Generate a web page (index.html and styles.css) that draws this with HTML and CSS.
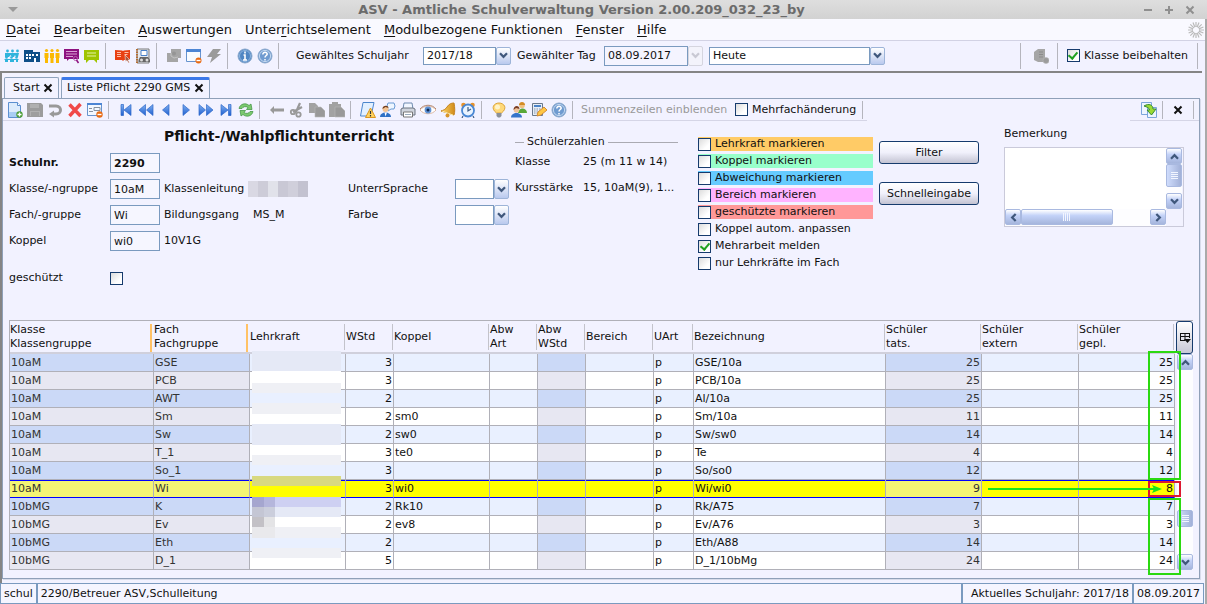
FILE: index.html
```html
<!DOCTYPE html>
<html lang="de">
<head>
<meta charset="utf-8">
<title>ASV - Amtliche Schulverwaltung</title>
<link rel="stylesheet" href="styles.css">
</head>
<body>
<svg class="defs" aria-hidden="true">
  <linearGradient id="blue" x1="0" x2="0" y1="0" y2="1"><stop offset="0" stop-color="#7fb0f0"/><stop offset="1" stop-color="#1f5fd0"/></linearGradient>
  <linearGradient id="gold" x1="0" x2="1"><stop offset="0" stop-color="#ffd768"/><stop offset="1" stop-color="#d08a18"/></linearGradient>
  <symbol id="chev" viewBox="0 0 10 8"><path d="M1 1.500L5 5.500L9 1.500" fill="none" stroke="currentColor" stroke-width="2.600"/></symbol>
  <symbol id="pupils" viewBox="0 0 16 16"><g fill="#2fb4dc"><circle cx="3.500" cy="3" r="1.400"/><circle cx="8.500" cy="3" r="1.400"/><circle cx="13.500" cy="3" r="1.400"/><path d="M1 5h14l-1 4h-2l-1-2-1 2H8L6.500 7 5 9H1z"/><circle cx="2.500" cy="9.500" r="1.300"/><circle cx="7.500" cy="9.500" r="1.300"/><circle cx="12.500" cy="9.500" r="1.300"/><path d="M0 11h15l-1 1v2h-2v-2h-2v2H6v-2H4v2H1v-2z"/></g></symbol>
  <symbol id="school" viewBox="0 0 16 16"><path d="M0 2h9v2h7v10H0z" fill="#0f4f88"/><path d="M2 6h2v2H2zM5 6h2v2H5zM8 6h2v2H8zM12 6h2v2h-2zM2 9h2v2H2zM5 9h2v2H5zM10 10h2v4h-2z" fill="#fff"/></symbol>
  <symbol id="staff" viewBox="0 0 16 16"><g fill="#fbb900"><circle cx="2.500" cy="2.500" r="1.600"/><circle cx="8" cy="2.500" r="1.600"/><circle cx="13.500" cy="2.500" r="1.600"/><path d="M.5 5h4v5H4v5H1v-5H.5zM6 5h4v5h-.5v5h-3v-5H6zM11.500 5h4v5H15v5h-3v-5h-.5z"/></g></symbol>
  <symbol id="board" viewBox="0 0 16 16"><path d="M0 1h15v10H5l-2 2v-2H0z" fill="#8d117f"/><path d="M2 3.500h11M2 6h11M2 8.500h7" stroke="#d9a0d4"/><circle cx="11.500" cy="10.500" r="2" fill="none" stroke="#b85fb0"/><path d="M12.500 12l2 3" stroke="#8d117f" stroke-width="1.500"/></symbol>
  <symbol id="green" viewBox="0 0 16 16"><path d="M0 2h15v10h-2v3l-3-3H5l-3 3v-3H0z" fill="#9fc400"/><path d="M3 5h9M3 8h9" stroke="#e4f2a4"/></symbol>
  <symbol id="book" viewBox="0 0 16 16"><path d="M0 2l7 .5L8 3l1-.5L15 2v10H9l-1 1-1-1H0z" fill="#e83f12"/><path d="M2 4.500h4M2 6.500h4M2 8.500h4M9.500 4.500h4M9.500 6.500h3" stroke="#ffc0a8"/><path d="M10 7l5 5h-2l1.500 2.500-1 .5-1.500-2.500-1.500 1z" fill="#a9553d" stroke="#fff" stroke-width=".5"/></symbol>
  <symbol id="address" viewBox="0 0 16 16"><path d="M2 1h12v14H2z" fill="#e4e8ee" stroke="#7b7b7b"/><path d="M2 1v14" stroke="#b56c30" stroke-width="2" stroke-dasharray="1.500 1"/><path d="M6 2.500h6v5H6z" fill="#fff" stroke="#4b82c9"/><path d="M5 9h8l2 3v2H3.500v-2z" fill="#666"/><circle cx="6.500" cy="12" r="1.500" fill="#ddd"/><circle cx="12" cy="12" r="1.500" fill="#ddd"/></symbol>
  <symbol id="puzzle" viewBox="0 0 16 16"><path d="M5 1h10v9h-3v4H1V5h4z" fill="#a5a5a5"/><path d="M5 5v3l3 2 4-1" fill="none" stroke="#c2c2c2"/><circle cx="8" cy="5.500" r="2" fill="#959595"/></symbol>
  <symbol id="window" viewBox="0 0 16 16"><path d="M.5 1.500h14v12H.5z" fill="#f8fbff" stroke="#6793ce"/><path d="M0 1h15v3H0z" fill="#4c85d4"/><circle cx="12.500" cy="12.500" r="3" fill="#e86a12"/><path d="M10.500 12.500h4" stroke="#fff" stroke-width="1.400"/></symbol>
  <symbol id="bolt" viewBox="0 0 16 16"><path d="M7 1h8l-4 5h4L4 15l2-6H1z" fill="#9b9b9b"/></symbol>
  <symbol id="info" viewBox="0 0 16 16"><circle cx="8" cy="8" r="7" fill="#4f86c3" stroke="#8aa8cc"/><circle cx="8" cy="8" r="5.500" fill="none" stroke="#a9c9ea" stroke-width=".7"/><path d="M8 3.500v2M6.500 7H8v5M6 12h4" stroke="#fff" stroke-width="1.600" fill="none"/></symbol>
  <symbol id="help" viewBox="0 0 16 16"><circle cx="8" cy="8" r="7" fill="#6f9bd0" stroke="#8aa8cc"/><circle cx="8" cy="8" r="5.600" fill="none" stroke="#d8e6f6" stroke-width=".8"/><path d="M5.800 6.500c0-3 4.600-2.600 4.400-.3C10 7.600 8 7.500 8 9.500M8 11v1.500" stroke="#fff" stroke-width="1.500" fill="none"/></symbol>
  <symbol id="server" viewBox="0 0 16 16"><path d="M1 4l4-3h7v13H5l-4-2z" fill="#a6a6a6"/><path d="M6 4h4M6 6.500h4M6 9h4" stroke="#8b8b8b"/><circle cx="13" cy="12.500" r="3" fill="#9c9c9c" stroke="#b8b8b8" stroke-width=".6"/></symbol>
  <symbol id="new" viewBox="0 0 16 16"><path d="M1.500 .5h9l3 3v12h-12z" fill="#dcebfc" stroke="#5b8fd0"/><path d="M2 10h11v5H2z" fill="#a9cdf4"/><path d="M10.500 .5v3h3" fill="#fff" stroke="#5b8fd0"/><circle cx="12.500" cy="12.500" r="3.200" fill="#4a9c35"/><path d="M10.500 12.500h4M12.500 10.500v4" stroke="#fff" stroke-width="1.300"/></symbol>
  <symbol id="save" viewBox="0 0 16 16"><path d="M0 1h14l2 2v12H0z" fill="#9c9c9c"/><path d="M3 2h9v4H3zM3 9h10v5H3z" fill="#b0b0b0"/><path d="M4 11h8M4 13h8" stroke="#8c8c8c"/></symbol>
  <symbol id="undo" viewBox="0 0 16 16"><path d="M2 4h7c6 0 6 8 0 8H6" fill="none" stroke="#999" stroke-width="3"/><path d="M7 8.500v7L2 12z" fill="#999"/></symbol>
  <symbol id="delete" viewBox="0 0 16 16"><path d="M2.500 2.500L13.500 14M13.500 2L2.500 14" stroke="#f04848" stroke-width="3.400"/></symbol>
  <symbol id="form" viewBox="0 0 16 16"><path d="M.5 1.500h14v12H.5z" fill="#f3f8ff" stroke="#6793ce"/><path d="M0 2h15" stroke="#4c85d4" stroke-width="2"/><path d="M2 6.500h3M2 9.500h4M7 5.500h6v3H7z" stroke="#87919e" fill="none"/><circle cx="12.500" cy="12.500" r="3.200" fill="#e86a12"/><path d="M10.500 12.500h4" stroke="#fff" stroke-width="1.400"/></symbol>
  <symbol id="first" viewBox="0 0 16 16"><path d="M3 2.500h2.500v11H3zM13 2.500v11L6 8z" fill="url(#blue)" stroke="#2f68c8" stroke-width=".7"/></symbol>
  <symbol id="rewind" viewBox="0 0 16 16"><path d="M7.500 2.500v11L1 8zM15 2.500v11L8.500 8z" fill="url(#blue)" stroke="#2f68c8" stroke-width=".7"/></symbol>
  <symbol id="prev" viewBox="0 0 16 16"><path d="M11 2.500v11L4.500 8z" fill="url(#blue)" stroke="#2f68c8" stroke-width=".7"/></symbol>
  <symbol id="next" viewBox="0 0 16 16"><path d="M5 2.500v11L11.500 8z" fill="url(#blue)" stroke="#2f68c8" stroke-width=".7"/></symbol>
  <symbol id="forward" viewBox="0 0 16 16"><path d="M1 2.500v11L7.500 8zM8.500 2.500v11L15 8z" fill="url(#blue)" stroke="#2f68c8" stroke-width=".7"/></symbol>
  <symbol id="last" viewBox="0 0 16 16"><path d="M10.500 2.500H13v11h-2.500zM3 2.500v11L10 8z" fill="url(#blue)" stroke="#2f68c8" stroke-width=".7"/></symbol>
  <symbol id="refresh" viewBox="0 0 16 16"><g fill="#7cc96f" stroke="#3a8f3c" stroke-width=".7"><path d="M1 6.500C2 1.500 8 .5 11 3.500l2-1.500 1 5.500H8.500L10 5.500C8 4 5 4.500 4 6.500z"/><path d="M15 9.500c-1 5-7 6-10 3L3 14 2 8.500h5.500L6 10.500c2 1.500 5 1 6-1z"/></g></symbol>
  <symbol id="left" viewBox="0 0 16 16"><path d="M1 8l4-4v2.500h10v3H5V12z" fill="#999"/></symbol>
  <symbol id="cut" viewBox="0 0 16 16"><path d="M11 1L7 10M13 5L4 10" stroke="#999" stroke-width="2.200"/><circle cx="4" cy="10" r="2.200" fill="none" stroke="#999" stroke-width="1.800"/><circle cx="9.500" cy="12.500" r="2.200" fill="none" stroke="#999" stroke-width="1.800"/></symbol>
  <symbol id="copy" viewBox="0 0 16 16"><path d="M0 1h6l3 3v7H0z" fill="#a2a2a2"/><path d="M6 5h6l4 4v6H6z" fill="#999" stroke="#bbb" stroke-width=".6"/></symbol>
  <symbol id="paste" viewBox="0 0 16 16"><path d="M0 2h3V0h6v2h3v13H0z" fill="#a2a2a2"/><path d="M6 5h6l4 4v6H6z" fill="#999" stroke="#bbb" stroke-width=".6"/></symbol>
  <symbol id="warn" viewBox="0 0 16 16"><path d="M3 .5h11L11.500 12v2H.5z" fill="#e2f0ff" stroke="#4c86cc"/><path d="M10.500 6l5 9.500h-10z" fill="#ffd35e" stroke="#dc951d"/><path d="M10.500 9v3M10.500 13v1.500" stroke="#333" stroke-width="1.200"/></symbol>
  <symbol id="talk" viewBox="0 0 16 16"><path d="M8 1h6q2 3 0 6h-3l-3 2V7q-2-3 0-6z" fill="#eef6ff" stroke="#6a9bd4"/><circle cx="5.500" cy="7" r="3" fill="#f4c392"/><path d="M2.500 7c0-4 6-4 6-1L5.500 5z" fill="#6f3e1e"/><path d="M0 15c0-6 11-6 11 0z" fill="#2f71c6"/><path d="M4.500 10.500l1 4 1.500-4z" fill="#fff"/></symbol>
  <symbol id="print" viewBox="0 0 16 16"><path d="M4 1h8l1 6H3z" fill="#f2f7ff" stroke="#6e8bb0"/><path d="M1 7l2-1h10l2 1v6H1z" fill="#cfd4dc" stroke="#6c7480"/><path d="M3.500 10h9v5h-9z" fill="#fff" stroke="#777"/><path d="M5 12.500h6" stroke="#9ab"/></symbol>
  <symbol id="eye" viewBox="0 0 16 16"><path d="M0 8c4-5 12-5 16 0-4 5-12 5-16 0z" fill="#fff" stroke="#dcb9a5"/><path d="M0 7c4-5 12-5 16 0" fill="none" stroke="#b58a74"/><circle cx="8" cy="8" r="3.400" fill="#5f92d5"/><circle cx="8" cy="8" r="1.500" fill="#122b50"/></symbol>
  <symbol id="bell" viewBox="0 0 16 16"><path d="M14 1c1 5 1 9 0 12L1 9c3-1 5-2 6-4 2-3 4-4 7-4z" fill="url(#gold)" stroke="#c58420"/><path d="M2 9l11 4" stroke="#fff0ad"/><circle cx="7.500" cy="13.500" r="2" fill="#d9962a"/></symbol>
  <symbol id="clock" viewBox="0 0 16 16"><circle cx="3.500" cy="3" r="2.300" fill="#e5902a"/><circle cx="12.500" cy="3" r="2.300" fill="#e5902a"/><circle cx="8" cy="8.500" r="6" fill="#eaf4ff" stroke="#4a88d4" stroke-width="1.800"/><path d="M8 5v4l3-2M3 14l-1 2M13 14l1 2" stroke="#3c5c86" stroke-width="1.200" fill="none"/></symbol>
  <symbol id="bulb" viewBox="0 0 16 16"><path d="M5.500 11C-1 6 3 1 8 1s9 5 2.500 10z" fill="#ffd97a" stroke="#dca53c"/><circle cx="6.500" cy="5" r="2.500" fill="#fff3c8"/><path d="M5.500 11h5v3L9 15.500H7L5.500 14z" fill="#8a9099"/></symbol>
  <symbol id="users" viewBox="0 0 16 16"><circle cx="11" cy="3.500" r="2.800" fill="#f0c080"/><path d="M8 3c0-4 6-4 6 0z" fill="#d48c25"/><path d="M7 11c0-6 9-6 9 0z" fill="#59a838"/><circle cx="5.500" cy="8" r="2.800" fill="#f0c29b"/><path d="M2.500 8c0-5 6-5 6-1L5 6z" fill="#7a3d24"/><path d="M0 15.500c0-6 11-6 11 0z" fill="#3575cb"/></symbol>
  <symbol id="calc" viewBox="0 0 16 16"><path d="M1.500 1.500h10v12h-10z" fill="#e7edf6" stroke="#69788c"/><path d="M3 3h7v2H3z" fill="#4b83c8"/><path d="M3 7h7M3 9h7M3 11h5" stroke="#8495ab" stroke-dasharray="1.500 1"/><path d="M6 14l1-4 6-5 3 3-6 5z" fill="#ffc744" stroke="#d58c35"/></symbol>
  <symbol id="export" viewBox="0 0 16 16"><path d="M.5 .5h10v12H.5z" fill="#edf5ff" stroke="#7ba5dc"/><path d="M6.500 5.500h9v10h-9z" fill="#edf5ff" stroke="#7ba5dc"/><path d="M3 4c5-3 9-1 9 3h3l-4.500 6L6 8h2.500C8.500 6 6 5 3 4z" fill="#9bdb35" stroke="#368a35"/></symbol>
</svg>

<header class="titlebar">
  <span class="win-menu"></span>
  <h1>ASV - Amtliche Schulverwaltung Version 2.00.209_032_23_by</h1>
  <div class="win-buttons">
    <button type="button" aria-label="Minimieren"><svg viewBox="0 0 10 10"><path d="M1 5h8"/></svg></button>
    <button type="button" aria-label="Maximieren"><svg viewBox="0 0 10 10"><path d="M1 5h8M5 1v8"/></svg></button>
    <button type="button" aria-label="Schließen"><svg viewBox="0 0 10 10"><path d="M1.500 1.500l7 7M8.500 1.500l-7 7"/></svg></button>
  </div>
</header>
<div class="frame">
<nav class="menubar">
  <a href="#"><u>D</u>atei</a><a href="#"><u>B</u>earbeiten</a><a href="#"><u>A</u>uswertungen</a><a href="#">Unter<u>r</u>ichtselement</a><a href="#"><u>M</u>odulbezogene Funktionen</a><a href="#"><u>F</u>enster</a><a href="#"><u>H</u>ilfe</a>
  <svg class="spinner" viewBox="0 0 16 16"><g stroke="#bbb" stroke-width="1.200"><path d="M8 0v5M8 11v5M0 8h5M11 8h5M2.300 2.300l3.600 3.600M10.100 10.100l3.600 3.600M2.300 13.700l3.600-3.600M10.100 5.900l3.600-3.600M5 .6l1.900 4.600M9.100 10.800l1.900 4.600M11 .6L9.100 5.200M6.900 10.800L5 15.400M.6 5l4.600 1.900M10.800 9.100l4.600 1.900M.6 11l4.600-1.900M10.800 6.900L15.400 5"/></g></svg>
</nav>
<div class="toolbar main-tools">
  <div class="icons">
    <button type="button" aria-label="Schüler"><svg><use href="#pupils"/></svg></button>
    <button type="button" aria-label="Schule"><svg><use href="#school"/></svg></button>
    <button type="button" aria-label="Lehrkräfte"><svg><use href="#staff"/></svg></button>
    <button type="button" aria-label="Klassen"><svg><use href="#board"/></svg></button>
    <button type="button" aria-label="Unterricht"><svg><use href="#green"/></svg></button>
  </div>
  <div class="icons">
    <button type="button" aria-label="Unterrichtsplanung"><svg><use href="#book"/></svg></button>
    <button type="button" aria-label="Adressen"><svg><use href="#address"/></svg></button>
  </div>
  <div class="icons">
    <button type="button" aria-label="Module"><svg><use href="#puzzle"/></svg></button>
    <button type="button" aria-label="Fenster schließen"><svg><use href="#window"/></svg></button>
    <button type="button" aria-label="Ausführen"><svg><use href="#bolt"/></svg></button>
  </div>
  <div class="icons">
    <button type="button" aria-label="Info"><svg><use href="#info"/></svg></button>
    <button type="button" aria-label="Hilfe"><svg><use href="#help"/></svg></button>
  </div>
  <label class="year-label" for="year">Gewähltes Schuljahr</label>
  <span class="combo year"><select id="year"><option>2017/18</option></select><i class="arrow"><svg><use href="#chev"/></svg></i></span>
  <label class="day-label" for="day">Gewählter Tag</label>
  <span class="combo day off"><input id="day" value="08.09.2017"><i class="arrow"><svg><use href="#chev"/></svg></i></span>
  <span class="combo today"><select aria-label="Tag"><option>Heute</option></select><i class="arrow"><svg><use href="#chev"/></svg></i></span>
  <div class="keep">
    <button type="button" aria-label="Server"><svg><use href="#server"/></svg></button>
    <label class="check"><input type="checkbox" checked>Klasse beibehalten</label>
  </div>
</div>

<main class="desk">
  <div class="tabs">
    <div class="tab">Start<button type="button" aria-label="Tab schließen"><svg viewBox="0 0 10 10"><path d="M1.500 1.500l7 7M8.500 1.500l-7 7"/></svg></button></div>
    <div class="tab active">Liste Pflicht 2290 GMS<button type="button" aria-label="Tab schließen"><svg viewBox="0 0 10 10"><path d="M1.500 1.500l7 7M8.500 1.500l-7 7"/></svg></button></div>
  </div>
  <section class="panel">
    <div class="panel-tools">
      <div class="toolbar list-tools">
        <div class="icons">
          <button type="button" aria-label="Neu"><svg><use href="#new"/></svg></button>
          <button type="button" aria-label="Speichern"><svg><use href="#save"/></svg></button>
          <button type="button" aria-label="Rückgängig"><svg><use href="#undo"/></svg></button>
          <button type="button" aria-label="Löschen"><svg><use href="#delete"/></svg></button>
          <button type="button" aria-label="Formular"><svg><use href="#form"/></svg></button>
        </div>
        <div class="icons">
          <button type="button" aria-label="Erster"><svg><use href="#first"/></svg></button>
          <button type="button" aria-label="Seite zurück"><svg><use href="#rewind"/></svg></button>
          <button type="button" aria-label="Zurück"><svg><use href="#prev"/></svg></button>
          <button type="button" aria-label="Weiter"><svg><use href="#next"/></svg></button>
          <button type="button" aria-label="Seite vor"><svg><use href="#forward"/></svg></button>
          <button type="button" aria-label="Letzter"><svg><use href="#last"/></svg></button>
          <button type="button" aria-label="Aktualisieren"><svg><use href="#refresh"/></svg></button>
        </div>
        <div class="icons">
          <button type="button" aria-label="Links"><svg><use href="#left"/></svg></button>
          <button type="button" aria-label="Ausschneiden"><svg><use href="#cut"/></svg></button>
          <button type="button" aria-label="Kopieren"><svg><use href="#copy"/></svg></button>
          <button type="button" aria-label="Einfügen"><svg><use href="#paste"/></svg></button>
        </div>
        <div class="icons">
          <button type="button" aria-label="Prüfen"><svg><use href="#warn"/></svg></button>
          <button type="button" aria-label="Nachricht"><svg><use href="#talk"/></svg></button>
          <button type="button" aria-label="Drucken"><svg><use href="#print"/></svg></button>
          <button type="button" aria-label="Ansicht"><svg><use href="#eye"/></svg></button>
          <button type="button" aria-label="Glocke"><svg><use href="#bell"/></svg></button>
          <button type="button" aria-label="Wecker"><svg><use href="#clock"/></svg></button>
        </div>
        <div class="icons">
          <button type="button" aria-label="Tipp"><svg><use href="#bulb"/></svg></button>
          <button type="button" aria-label="Personen"><svg><use href="#users"/></svg></button>
          <button type="button" aria-label="Berechnen"><svg><use href="#calc"/></svg></button>
          <button type="button" aria-label="Hilfe"><svg><use href="#help"/></svg></button>
        </div>
        <div class="multi">
          <button type="button" class="sums" disabled>Summenzeilen einblenden</button>
          <label class="check"><input type="checkbox">Mehrfachänderung</label>
        </div>
      </div>
      <div class="toolbar close-tools">
        <button type="button" aria-label="Exportieren"><svg><use href="#export"/></svg></button>
        <button type="button" class="close" aria-label="Schließen"><svg viewBox="0 0 10 10"><path d="M1.500 1.500l7 7M8.500 1.500l-7 7"/></svg></button>
      </div>
    </div>

    <form class="details">
      <div class="fields">
        <h2>Pflicht-/Wahlpflichtunterricht</h2>
        <label class="strong" for="nr">Schulnr.</label><input class="strong" id="nr" value="2290">
        <label class="first" for="kl">Klasse/-ngruppe</label><input id="kl" value="10aM">
        <div class="extra">Klassenleitung <span class="masked"><i></i><i></i><i></i><i></i><i></i><i></i></span></div>
        <label for="us">UnterrSprache</label><span class="combo"><select id="us"><option></option></select><i class="arrow"><svg><use href="#chev"/></svg></i></span>
        <label class="first" for="fg">Fach/-gruppe</label><input id="fg" value="Wi">
        <div class="extra"><span class="course">Bildungsgang</span><span>MS_M</span></div>
        <label for="fa">Farbe</label><span class="combo"><select id="fa"><option></option></select><i class="arrow"><svg><use href="#chev"/></svg></i></span>
        <label class="first" for="ko">Koppel</label><input id="ko" value="wi0"><div class="extra">10V1G</div>
        <label class="first guard" for="gs">geschützt</label><input class="guard" type="checkbox" id="gs">
      </div>
      <fieldset class="counts">
        <legend>Schülerzahlen</legend>
        <dl><dt>Klasse</dt><dd>25 (m 11 w 14)</dd><dt>Kursstärke</dt><dd>15, 10aM(9), 1...</dd></dl>
      </fieldset>
      <div class="marks">
        <label class="check mark-orange"><input type="checkbox">Lehrkraft markieren</label>
        <label class="check mark-mint"><input type="checkbox">Koppel markieren</label>
        <label class="check mark-sky"><input type="checkbox">Abweichung markieren</label>
        <label class="check mark-pink"><input type="checkbox">Bereich markieren</label>
        <label class="check mark-red"><input type="checkbox">geschützte markieren</label>
        <label class="check"><input type="checkbox">Koppel autom. anpassen</label>
        <label class="check"><input type="checkbox" checked>Mehrarbeit melden</label>
        <label class="check"><input type="checkbox">nur Lehrkräfte im Fach</label>
      </div>
      <div class="actions"><button type="button">Filter</button><button type="button">Schnelleingabe</button></div>
      <div class="remark">
        <label for="rem">Bemerkung</label>
        <div class="scrollbox">
          <textarea id="rem"></textarea>
          <div class="vbar"><i class="sb"><svg class="up"><use href="#chev"/></svg></i><i class="thumb"></i><i class="sb end"><svg><use href="#chev"/></svg></i></div>
          <div class="hbar"><i class="sb"><svg class="lt"><use href="#chev"/></svg></i><i class="thumb"></i><i class="sb end"><svg class="rt"><use href="#chev"/></svg></i></div>
        </div>
      </div>
    </form>

    <div class="list">
      <table>
        <colgroup><col class="c144"><col class="c96"><col class="c96"><col class="c48"><col class="c96"><col class="c48"><col class="c48"><col class="c68"><col class="c40"><col><col class="c96"><col class="c97"><col class="c96"></colgroup>
        <thead><tr><th class="sorted">Klasse<br>Klassengruppe</th><th class="sorted">Fach<br>Fachgruppe</th><th>Lehrkraft</th><th>WStd</th><th>Koppel</th><th>Abw<br>Art</th><th>Abw<br>WStd</th><th>Bereich</th><th>UArt</th><th>Bezeichnung</th><th>Schüler<br>tats.</th><th>Schüler<br>extern</th><th>Schüler<br>gepl.</th></tr></thead>
        <tbody>
          <tr><td>10aM</td><td>GSE</td><td></td><td>3</td><td></td><td></td><td></td><td></td><td>p</td><td>GSE/10a</td><td>25</td><td></td><td>25</td></tr>
          <tr><td>10aM</td><td>PCB</td><td></td><td>3</td><td></td><td></td><td></td><td></td><td>p</td><td>PCB/10a</td><td>25</td><td></td><td>25</td></tr>
          <tr><td>10aM</td><td>AWT</td><td></td><td>2</td><td></td><td></td><td></td><td></td><td>p</td><td>Al/10a</td><td>25</td><td></td><td>25</td></tr>
          <tr><td>10aM</td><td>Sm</td><td></td><td>2</td><td>sm0</td><td></td><td></td><td></td><td>p</td><td>Sm/10a</td><td>11</td><td></td><td>11</td></tr>
          <tr><td>10aM</td><td>Sw</td><td></td><td>2</td><td>sw0</td><td></td><td></td><td></td><td>p</td><td>Sw/sw0</td><td>14</td><td></td><td>14</td></tr>
          <tr><td>10aM</td><td>T_1</td><td></td><td>3</td><td>te0</td><td></td><td></td><td></td><td>p</td><td>Te</td><td>4</td><td></td><td>4</td></tr>
          <tr><td>10aM</td><td>So_1</td><td></td><td>3</td><td></td><td></td><td></td><td></td><td>p</td><td>So/so0</td><td>12</td><td></td><td>12</td></tr>
          <tr class="selected"><td>10aM</td><td>Wi</td><td></td><td>3</td><td>wi0</td><td></td><td></td><td></td><td>p</td><td>Wi/wi0</td><td>9</td><td></td><td>8</td></tr>
          <tr><td>10bMG</td><td>K</td><td></td><td>2</td><td>Rk10</td><td></td><td></td><td></td><td>p</td><td>Rk/A75</td><td>7</td><td></td><td>7</td></tr>
          <tr><td>10bMG</td><td>Ev</td><td></td><td>2</td><td>ev8</td><td></td><td></td><td></td><td>p</td><td>Ev/A76</td><td>3</td><td></td><td>3</td></tr>
          <tr><td>10bMG</td><td>Eth</td><td></td><td>2</td><td></td><td></td><td></td><td></td><td>p</td><td>Eth/A88</td><td>14</td><td></td><td>14</td></tr>
          <tr><td>10bMG</td><td>D_1</td><td></td><td>5</td><td></td><td></td><td></td><td></td><td>p</td><td>D_1/10bMg</td><td>24</td><td></td><td>24</td></tr>
        </tbody>
      </table>
      <div class="list-side">
        <button type="button" class="columns" aria-label="Spalten"><svg viewBox="0 0 12 12"><path d="M1 1.500h10M1.500 1v8M6 1v8M10.500 1v5M1 4.500h10M1 8.500h5" fill="none" stroke="#111"/><path d="M5 7h7l-3.500 4z" fill="#111"/></svg></button>
        <div class="vbar"><i class="sb"><svg class="up"><use href="#chev"/></svg></i><i class="thumb"></i><i class="sb end"><svg><use href="#chev"/></svg></i></div>
      </div>
      <svg class="mask" viewBox="0 0 89 218" preserveAspectRatio="none">
        <path d="M0 0h89v20H0z" fill="#e5e9f6"/><path d="M0 20h89v12H0z" fill="#fff"/><path d="M0 32h89v10H0z" fill="#eff0f5"/><path d="M0 42h89v10H0z" fill="#e9f0ff"/><path d="M0 52h89v11H0z" fill="#eff0f5"/><path d="M0 63h89v10H0z" fill="#fff"/><path d="M0 73h89v21H0z" fill="#e5e9f6"/><path d="M0 94h89v10H0z" fill="#fff"/><path d="M0 104h89v10H0z" fill="#eff0f5"/><path d="M0 114h89v11H0z" fill="#e9f0ff"/><path d="M0 125h89v10H0z" fill="#d8d980"/><path d="M0 135h89v11H0z" fill="#ff0"/><path d="M0 146h89v10H0z" fill="#ced0f2"/><path d="M0 156h89v10H0z" fill="#e5e9f6"/><path d="M0 166h89v10H0z" fill="#fff"/><path d="M0 176h89v11H0z" fill="#eff0f5"/><path d="M0 187h89v10H0z" fill="#e9f0ff"/><path d="M0 197h89v10H0z" fill="#eff0f5"/><path d="M0 207h89v11H0z" fill="#fff"/>
        <path d="M0 146h12v10H0z" fill="#a5a6cf"/><path d="M12 146h11v10H12z" fill="#b5b6dc"/><path d="M0 156h12v10H0z" fill="#c4c6d4"/><path d="M12 156h11v10H12z" fill="#cbcedc"/><path d="M0 166h12v10H0z" fill="#c3c1c6"/><path d="M12 166h11v10H12z" fill="#e4e4e6"/><path d="M0 176h23v11H0z" fill="#e9e9ec"/>
      </svg>
      <div class="note note-top"></div>
      <div class="note note-row"></div>
      <div class="note note-bottom"></div>
      <svg class="pointer" viewBox="0 0 174 8"><path d="M0 4h168" stroke="#19e319" stroke-width="2"/><path d="M164 0l10 4-10 4 2-4z" fill="#19e319"/></svg>
    </div>
  </section>
</main>
<footer class="status"><span>schul</span><span class="grow">2290/Betreuer ASV,Schulleitung</span><span class="term">Aktuelles Schuljahr: 2017/18</span><span>08.09.2017</span></footer>
</div>
</body>
</html>
```
FILE: styles.css
```css
* { box-sizing: border-box; }
body { margin: 0; min-height: 100vh; display: flex; flex-direction: column; background: #f2f2ff; color: #111; font: 11px/14px "DejaVu Sans", sans-serif; }
button, input, select, textarea { font: inherit; color: inherit; margin: 0; border-radius: 0; }
button { border: 0; padding: 0; background: none; display: flex; align-items: center; justify-content: center; }
h1, h2, dl, dd { margin: 0; }
svg { display: block; }
.defs { position: absolute; width: 0; height: 0; }

.titlebar { height: 19px; display: flex; align-items: center; padding: 0 12px 0 8px; background: linear-gradient(#dedede, #d2d2d2); color: #6b6b6b; }
.titlebar h1 { flex: 1; text-align: center; font-size: 13px; line-height: 19px; padding-left: 2px; }
.win-menu { border: 5px solid transparent; border-top-color: #999; border-bottom: 0; }
.win-buttons { display: flex; gap: 11px; }
.win-buttons svg { width: 10px; height: 10px; stroke: #8f8f8f; stroke-width: 2; }

.frame { flex: 1; display: flex; flex-direction: column; border-right: 2px solid #a9a9a9; }
.menubar { height: 22px; display: flex; align-items: center; gap: 13px; padding: 0 1px 0 6px; background: #f9f9ff; border-bottom: 1px solid #d2d2e4; font-size: 13px; line-height: 20px; }
.menubar a { color: #111; text-decoration: none; }
.menubar u { text-underline-offset: 2px; }
.spinner { width: 16px; height: 16px; margin-left: auto; }

.toolbar { display: flex; align-items: center; }
.toolbar button svg { width: 16px; height: 16px; }
.icons { display: flex; align-items: center; gap: 4px; border-right: 1px solid #b5b5bd; }
.main-tools { height: 30px; padding: 1px 7px 2px 4px; }
.main-tools .icons { height: 26px; padding-right: 5px; }
.main-tools .icons + .icons { padding-left: 9px; }
.year-label { margin-left: 17px; width: 127px; }
.day-label { margin-left: 6px; width: 87px; }
.combo { display: flex; height: 18px; }
.combo select, .combo input { appearance: none; flex: 1; min-width: 0; padding: 0 3px; border: 1px solid #7a9abf; background: #fff; outline: 0; }
.arrow { width: 15px; display: flex; align-items: center; justify-content: center; border: 1px solid #9db4d8; border-radius: 2px; background: linear-gradient(#fff, #b9c9ee); color: #40587c; }
.arrow svg { width: 9px; height: 7px; }
.year { width: 88px; }
.day { width: 99px; height: 20px; }
.off input { background: #f4f4ff; }
.off .arrow { background: #f3f3fb; border-color: #d5d5df; color: #c9c9d4; }
.today { width: 176px; margin-left: 6px; }
.keep { display: flex; align-items: center; height: 26px; margin-left: auto; border: solid #b5b5bd; border-width: 0 1px; padding-right: 9px; }
.keep button { width: 37px; height: 26px; padding-left: 5px; border-right: 1px solid #b5b5bd; margin-right: 9px; }
.check { display: flex; align-items: center; gap: 4px; white-space: nowrap; }
input[type="checkbox"] { appearance: none; flex: none; width: 13px; height: 13px; border: 1px solid #163b6d; background: linear-gradient(135deg, #dcdcdc, #fff 70%); display: grid; place-items: center; }
input[type="checkbox"]:checked::after { content: ""; width: 4px; height: 7px; margin-top: -2px; border: solid #21a121; border-width: 0 2px 2px 0; transform: rotate(40deg); }

.desk { flex: 1; display: flex; flex-direction: column; margin-right: 3px; padding: 4px 2px 4px 0; border: solid #858585; border-width: 2px 0 0 2px; }
.tabs { display: flex; align-items: flex-end; gap: 2px; padding-left: 2px; }
.tab { height: 21px; display: flex; align-items: center; gap: 3px; padding: 0 5px 0 8px; border: 1px solid #8fa3bd; border-bottom: 0; border-radius: 2px 2px 0 0; }
.tab.active { padding-left: 5px; padding-bottom: 3px; border-top: 3px solid #3b78e8; gap: 4px; }
.tab svg, .close svg { width: 10px; height: 10px; stroke: #111; stroke-width: 2; }
.tab button { width: 10px; }
.panel { flex: 1; display: flex; flex-direction: column; border: 1px solid #8fa0b8; padding-bottom: 7px; box-shadow: 1px 1px 0 #d7dbea; }
.panel-tools { display: flex; justify-content: space-between; }
.panel-tools .toolbar { height: 22px; border-bottom: 1px solid #d5d5e6; }
.list-tools { padding: 0 4px; }
.list-tools .icons { height: 18px; padding: 0 5px 0 9px; }
.list-tools .icons:first-child { padding-left: 0; }
.multi { display: flex; align-items: center; gap: 4px; height: 18px; padding: 0 6px 0 8px; border-right: 1px solid #b5b5bd; }
.sums { width: 150px; justify-content: flex-start; white-space: nowrap; color: #999; }
.close-tools { gap: 5px; padding: 0 5px 0 11px; }
.close-tools button { height: 18px; padding-right: 5px; border-right: 1px solid #b5b5bd; }
.close-tools .close { width: 26px; padding-left: 0; }
.toolbar .close svg { width: 10px; height: 10px; }

.details { display: flex; align-items: flex-start; min-height: 199px; padding: 4px 15px 0 6px; }
.fields { flex: none; width: 506px; display: grid; grid-template-columns: 101px 50px 188px 107px 54px; grid-template-rows: 22px repeat(4, 20px) 42px; row-gap: 6px; align-items: center; }
.fields h2 { grid-column: 2 / -1; padding-left: 54px; font-size: 14px; line-height: 22px; }
.fields .strong { font-weight: bold; }
.fields .first { grid-column: 1; }
.fields > input:not([type]) { width: 50px; height: 20px; padding: 0 3px; border: 1px solid #7a9abf; background: #f6f6ff; }
.fields .combo { height: 20px; }
.extra { display: flex; align-items: center; padding-left: 4px; white-space: nowrap; }
.course { width: 89px; }
.masked { display: flex; margin-left: 4px; }
.masked i { width: 10px; height: 16px; background: #d9d8e3; }
.masked i:nth-child(2) { background: #cdccd8; }
.masked i:nth-child(3) { background: #e1e2ea; }
.masked i:nth-child(4) { background: #c9c8d5; }
.masked i:nth-child(5) { background: #d0cfdb; }
.masked i:nth-child(6) { background: #c3c2d0; }
.counts { flex: none; width: 163px; margin: 10px 20px 0 0; padding: 0; border: 0; border-top: 1px solid #aaaab2; min-width: 0; }
.counts legend { margin-left: 9px; padding: 0 3px; }
.counts dl { display: grid; grid-template-columns: 68px 1fr; row-gap: 12px; padding-top: 6px; white-space: nowrap; }
.marks { flex: none; width: 175px; display: grid; row-gap: 3px; margin: 12px 6px 0 0; }
.marks .check { height: 14px; }
.mark-orange { background: #ffcb66; }
.mark-mint { background: #98ffcb; }
.mark-sky { background: #65cbff; }
.mark-pink { background: #ffb3ff; }
.mark-red { background: #ff9898; }
.actions { flex: none; width: 100px; display: grid; gap: 18px; margin: 16px 25px 0 0; }
.actions button { height: 23px; border: 1px solid #163b6d; border-radius: 3px; background: linear-gradient(#fff, #f0f0fb 50%, #c3c3d2); }
.remark { flex: 1; min-width: 120px; padding-top: 2px; }
.scrollbox { margin-top: 6px; height: 80px; display: grid; grid-template: 1fr 17px / 1fr 17px; border: 1px solid #cacada; }
.scrollbox textarea { width: 100%; height: 100%; border: 0; resize: none; background: #fff; }
.vbar, .hbar { display: flex; background: #fdfdff; }
.vbar { flex-direction: column; width: 16px; }
.sb, .thumb { display: flex; align-items: center; justify-content: center; flex: none; width: 16px; height: 16px; border: 1px solid #a9b9e0; border-radius: 2px; background: linear-gradient(#fff, #c3d2f8 40%, #a5b5dc); color: #40587c; }
.sb svg { width: 9px; height: 7px; }
.sb.end { margin-top: auto; }
.hbar .sb.end { margin: 0 0 0 auto; }
.up { transform: rotate(180deg); }
.lt { transform: rotate(90deg); }
.rt { transform: rotate(-90deg); }
.vbar .thumb { height: 23px; background: linear-gradient(90deg, #cfdcfc, #a2b1d8); }
.hbar .thumb { width: 92px; }
.thumb::after { content: ""; width: 7px; height: 8px; background: repeating-linear-gradient(#f2f5ff 0 1px, transparent 1px 2px); }
.hbar .thumb::after { width: 8px; background: repeating-linear-gradient(90deg, #f2f5ff 0 1px, transparent 1px 2px); }

.list { position: relative; display: flex; margin: 0 6px; border-top: 1px solid #b0b0b8; }
table { flex: 1; width: 0; table-layout: fixed; border-collapse: separate; border-spacing: 0; border-left: 1px solid #b0b0b8; }
.c144 { width: 144px; }
.c96 { width: 96px; }
.c97 { width: 97px; }
.c48 { width: 48px; }
.c68 { width: 68px; }
.c40 { width: 40px; }
th { height: 33px; padding: 2px 0 1px 0; text-align: left; font-weight: normal; border-bottom: 2px solid #d0d0dc; background: linear-gradient(#c3c3cb, #c3c3cb) right 1px top 3px / 1px 26px no-repeat; white-space: nowrap; }
th.sorted { background: linear-gradient(#ffc266, #ffc266) right 2px top 3px / 2px 28px no-repeat; }
td { height: 18px; padding: 0 1px; line-height: 17px; border: solid #b0b0b8; border-width: 0 1px 1px 0; background: #fff; white-space: nowrap; }
tbody tr:nth-child(odd) td { background: #e9f0ff; }
tbody td:nth-child(1), tbody td:nth-child(2), tbody td:nth-child(7), tbody td:nth-child(11) { background: #e7e7f2; color: #333; }
tbody tr:nth-child(odd) td:is(:nth-child(1), :nth-child(2), :nth-child(7), :nth-child(11)) { background: #cbd9f7; }
td:nth-child(4), td:nth-child(11), td:nth-child(13) { text-align: right; }
tbody tr.selected td { background: #ff0; box-shadow: inset 0 1px #00f; border-bottom-color: #00f; }
tbody tr.selected td:is(:nth-child(1), :nth-child(2), :nth-child(11)) { background: #f4f474; }
.list-side { flex: none; width: 18px; padding: 0 0 0 1px; display: flex; flex-direction: column; }
.columns { flex: none; width: 17px; height: 33px; border: 1px solid #163b6d; border-radius: 3px; background: linear-gradient(#fff, #c8c8d6); }
.columns svg { width: 12px; height: 12px; }
.list-side .vbar { flex: 1; margin-left: 1px; }
.list-side .thumb { height: 17px; margin-top: 140px; }
.mask { position: absolute; left: 243px; top: 30px; width: 89px; height: 218px; }
.note { position: absolute; right: 12px; width: 33px; border: 2px solid #2bd911; }
.note-top { top: 30px; height: 129px; }
.note-bottom { top: 177px; height: 77px; }
.note-row { top: 160px; height: 16px; border-color: #dc1830; }
.pointer { position: absolute; right: 31px; top: 164px; width: 174px; height: 8px; }

.status { display: flex; height: 21px; flex: none; margin-right: 1px; }
.status span { border: 1px solid #7a9abf; padding: 0 3px; line-height: 19px; background: #f5f5ff; white-space: nowrap; }
.status .grow { flex: 1; }
.status .term { padding-left: 8px; }
```
